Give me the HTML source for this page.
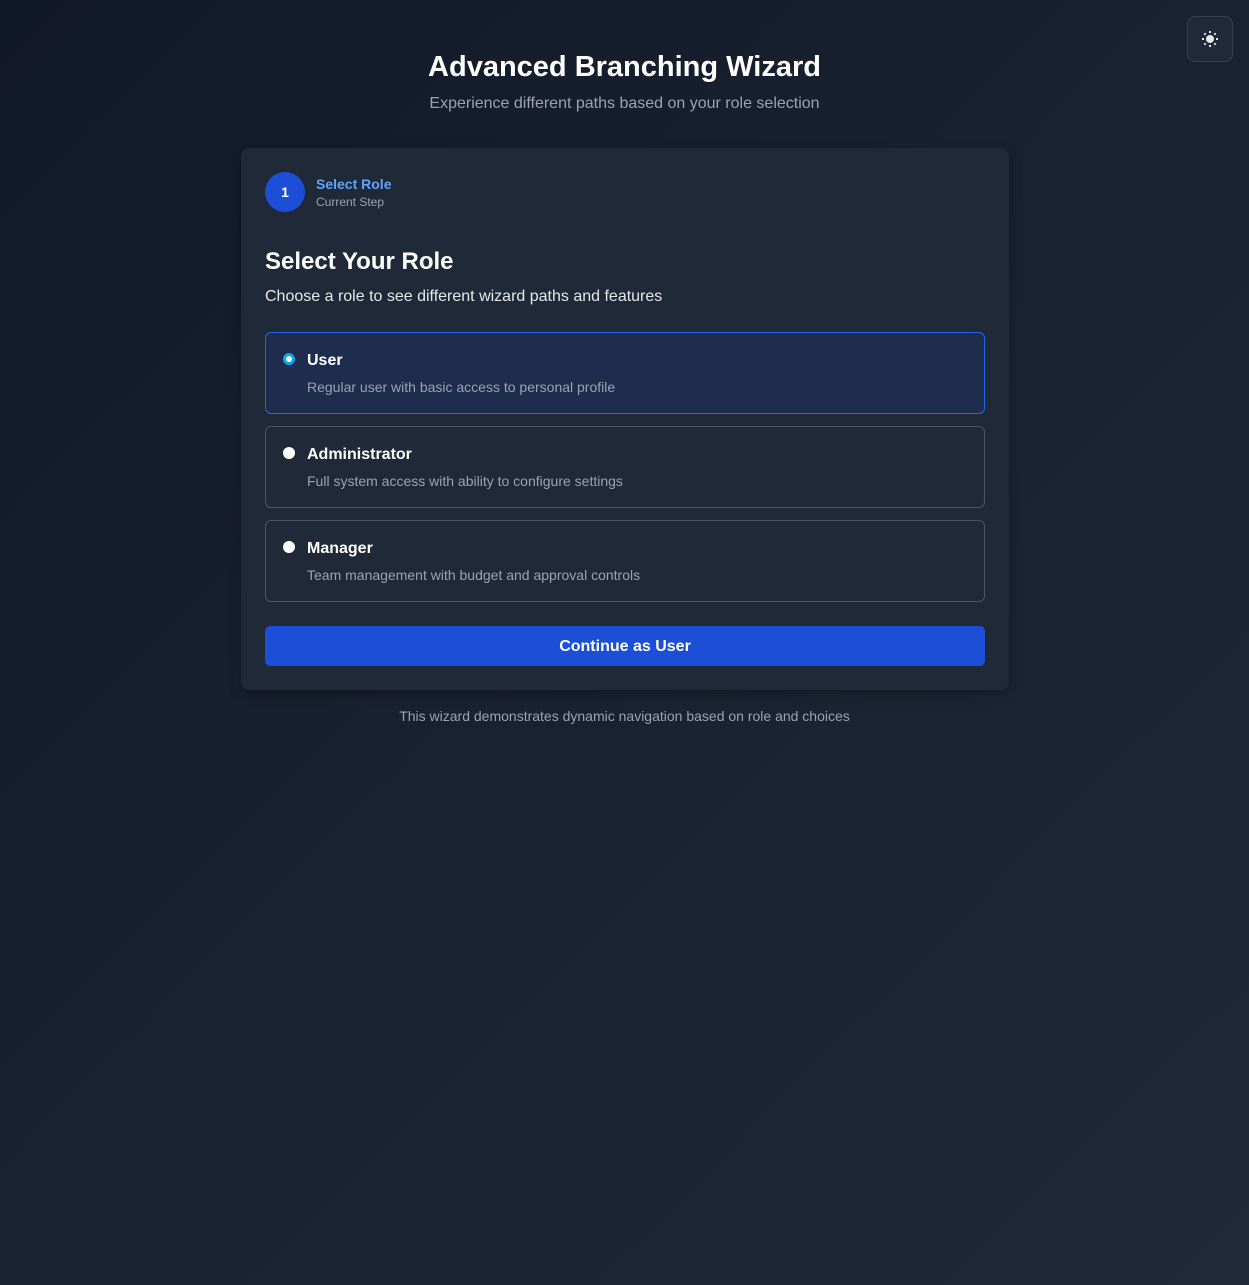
<!DOCTYPE html>
<html><head><style>
*{box-sizing:border-box;margin:0;padding:0}
body{width:1249px;height:1285px;background:linear-gradient(135deg,#111827 0%,#1a2232 50%,#1f2937 100%);font-family:"Liberation Sans",sans-serif;color:#fff;position:relative;overflow:hidden}
.theme{position:absolute;left:1187px;top:16px;width:46px;height:46px;border:1px solid #374151;border-radius:8px;background:#1f2937;display:flex;align-items:center;justify-content:center}
h1{position:absolute;top:51px;width:100%;text-align:center;font-size:29px;font-weight:bold}
.sub{position:absolute;top:95px;width:100%;text-align:center;font-size:16px;color:#9ca3af}
.card{position:absolute;left:241px;top:148px;width:768px;height:542px;background:#1f2937;border-radius:8px;box-shadow:0 4px 12px rgba(0,0,0,.3)}
.circ{position:absolute;left:24px;top:24px;width:40px;height:40px;border-radius:50%;background:#1d4ed8;display:flex;align-items:center;justify-content:center;font-weight:bold;font-size:14px}
.st{position:absolute;left:75px;top:28px;font-size:14px;color:#60a5fa;font-weight:bold}
.cs{position:absolute;left:75px;top:47px;font-size:12px;color:#9ca3af}
h2{position:absolute;left:24px;top:100px;font-size:24px;font-weight:bold}
.d{position:absolute;left:24px;top:140px;font-size:16px;color:#e5e7eb}
.opt{position:absolute;left:24px;width:720px;height:82px;border:1px solid #4b5563;border-radius:6px}
.opt.sel{border-color:#2563eb;background:#1e2d4d}
.r{position:absolute;left:17px;top:20px;width:12px;height:12px;border-radius:50%;background:#fff}
.sel .r{border:3px solid #0ea5e9;background:#fff}
.ot{position:absolute;left:41px;top:19px;font-size:16px;font-weight:bold}
.od{position:absolute;left:41px;top:46px;font-size:14px;color:#9ca3af}
.btn{position:absolute;left:24px;top:478px;width:720px;height:40px;background:#1d4ed8;border-radius:5px;text-align:center;line-height:42px;font-weight:bold;font-size:16px}
.foot{position:absolute;top:708px;width:100%;text-align:center;font-size:14px;color:#9ca3af}
</style></head><body>
<div class="theme"><svg width="18" height="18" viewBox="0 0 18 18" fill="#e5e7eb"><circle cx="9" cy="9" r="4"/><g stroke="#e5e7eb" stroke-width="2"><path d="M9 1v2M9 15v2M1 9h2M15 9h2M3.3 3.3l1.4 1.4M13.3 13.3l1.4 1.4M3.3 14.7l1.4-1.4M13.3 4.7l1.4-1.4"/></g></svg></div>
<h1>Advanced Branching Wizard</h1>
<div class="sub">Experience different paths based on your role selection</div>
<div class="card">
<div class="circ">1</div><div class="st">Select Role</div><div class="cs">Current Step</div>
<h2>Select Your Role</h2>
<div class="d">Choose a role to see different wizard paths and features</div>
<div class="opt sel" style="top:184px"><div class="r"></div><div class="ot">User</div><div class="od">Regular user with basic access to personal profile</div></div>
<div class="opt" style="top:278px"><div class="r"></div><div class="ot">Administrator</div><div class="od">Full system access with ability to configure settings</div></div>
<div class="opt" style="top:372px"><div class="r"></div><div class="ot">Manager</div><div class="od">Team management with budget and approval controls</div></div>
<div class="btn">Continue as User</div>
</div>
<div class="foot">This wizard demonstrates dynamic navigation based on role and choices</div>
</body></html>
